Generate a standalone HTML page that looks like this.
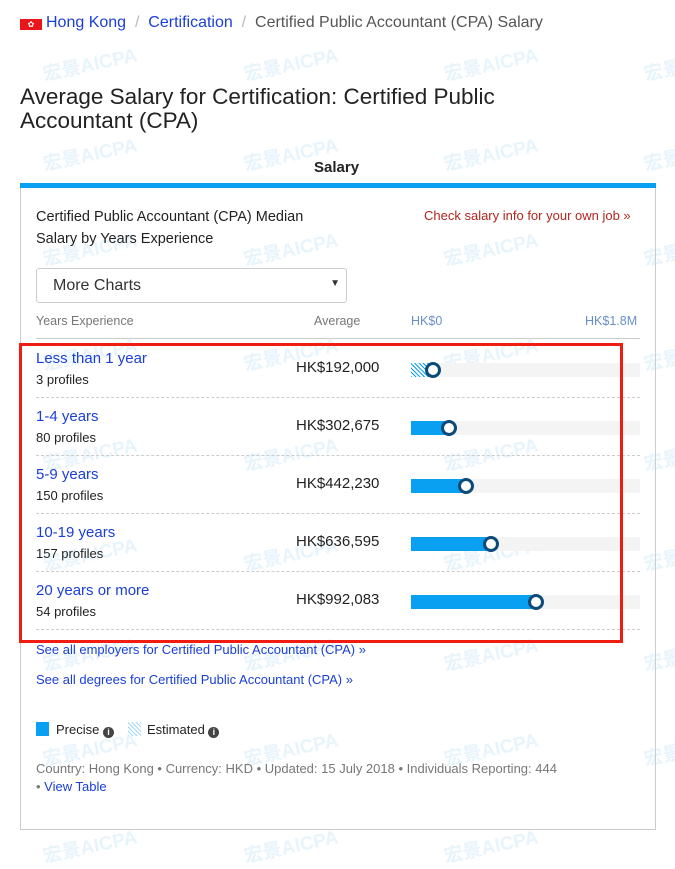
<!DOCTYPE html>
<html><head><meta charset="utf-8"><style>
*{margin:0;padding:0;box-sizing:border-box}
body{width:675px;height:848px;background:#fff;font-family:"Liberation Sans",sans-serif;position:relative;overflow:hidden;color:#222}
.a{position:absolute;white-space:nowrap}
.lnk{color:#1a3fd6}
.wm{position:absolute;color:#e8f4fc;font-weight:bold;font-size:19px;transform:rotate(-12deg);font-family:"Liberation Sans","Noto Sans CJK SC",sans-serif;white-space:nowrap}
.row{position:absolute;left:36px;width:604px;height:58px;border-bottom:1px dashed #ccc}
.row .t{position:absolute;left:0;top:10px;font-size:15px;color:#1a3fd6}
.row .p{position:absolute;left:0;top:32px;font-size:13px;color:#222}
.row .v{position:absolute;left:260px;top:19px;font-size:15px;color:#222}
.row .tr{position:absolute;left:375px;top:23px;width:229px;height:14px;background:#f4f4f4}
.row .b{position:absolute;left:375px;top:23px;height:14px;background:#0aa0f2}
.row .c{position:absolute;top:22px;width:16px;height:16px;border-radius:50%;border:3.5px solid #0c4a7a;background:#fff}
</style></head><body>
<div class="wm" style="left:42px;top:50px">宏景AICPA</div><div class="wm" style="left:243px;top:50px">宏景AICPA</div><div class="wm" style="left:443px;top:50px">宏景AICPA</div><div class="wm" style="left:643px;top:50px">宏景AICPA</div>
<div class="wm" style="left:42px;top:140px">宏景AICPA</div><div class="wm" style="left:243px;top:140px">宏景AICPA</div><div class="wm" style="left:443px;top:140px">宏景AICPA</div><div class="wm" style="left:643px;top:140px">宏景AICPA</div>
<div class="wm" style="left:42px;top:235px">宏景AICPA</div><div class="wm" style="left:243px;top:235px">宏景AICPA</div><div class="wm" style="left:443px;top:235px">宏景AICPA</div><div class="wm" style="left:643px;top:235px">宏景AICPA</div>
<div class="wm" style="left:42px;top:340px">宏景AICPA</div><div class="wm" style="left:243px;top:340px">宏景AICPA</div><div class="wm" style="left:443px;top:340px">宏景AICPA</div><div class="wm" style="left:643px;top:340px">宏景AICPA</div>
<div class="wm" style="left:42px;top:440px">宏景AICPA</div><div class="wm" style="left:243px;top:440px">宏景AICPA</div><div class="wm" style="left:443px;top:440px">宏景AICPA</div><div class="wm" style="left:643px;top:440px">宏景AICPA</div>
<div class="wm" style="left:42px;top:540px">宏景AICPA</div><div class="wm" style="left:243px;top:540px">宏景AICPA</div><div class="wm" style="left:443px;top:540px">宏景AICPA</div><div class="wm" style="left:643px;top:540px">宏景AICPA</div>
<div class="wm" style="left:42px;top:640px">宏景AICPA</div><div class="wm" style="left:243px;top:640px">宏景AICPA</div><div class="wm" style="left:443px;top:640px">宏景AICPA</div><div class="wm" style="left:643px;top:640px">宏景AICPA</div>
<div class="wm" style="left:42px;top:735px">宏景AICPA</div><div class="wm" style="left:243px;top:735px">宏景AICPA</div><div class="wm" style="left:443px;top:735px">宏景AICPA</div><div class="wm" style="left:643px;top:735px">宏景AICPA</div>
<div class="wm" style="left:42px;top:832px">宏景AICPA</div><div class="wm" style="left:243px;top:832px">宏景AICPA</div><div class="wm" style="left:443px;top:832px">宏景AICPA</div>

<div class="a" style="left:20px;top:19px;width:22px;height:11px;background:#e8161b;color:#fff;font-size:8px;text-align:center;line-height:11px">✿</div>
<div class="a" style="left:46px;top:14px;font-size:16px"><span class="lnk">Hong Kong</span><span style="color:#bbb">&nbsp; / &nbsp;</span><span class="lnk">Certification</span><span style="color:#bbb">&nbsp; / &nbsp;</span><span style="color:#555">Certified Public Accountant (CPA) Salary</span></div>
<div class="a" style="left:20px;top:85px;font-size:22.5px;line-height:24px;color:#222">Average Salary for Certification: Certified Public<br>Accountant (CPA)</div>
<div class="a" style="left:314px;top:159px;font-size:15px;font-weight:bold;color:#222">Salary</div>
<div class="a" style="left:20px;top:183px;width:636px;height:5px;background:#0aa0f2"></div>
<div class="a" style="left:20px;top:188px;width:636px;height:642px;border:1px solid #ccc;border-top:none"></div>
<div class="a" style="left:36px;top:206px;font-size:14.5px;line-height:22px;color:#222">Certified Public Accountant (CPA) Median<br>Salary by Years Experience</div>
<div class="a" style="left:424px;top:208px;font-size:13px;color:#b3261e">Check salary info for your own job »</div>
<div class="a" style="left:36px;top:268px;width:311px;height:35px;border:1px solid #ccc;border-radius:3px;font-size:16px;padding:8px 0 0 16px;color:#333">More Charts<span style="position:absolute;right:6px;top:9px;font-size:10px">▼</span></div>
<div class="a" style="left:36px;top:314px;font-size:12.5px;color:#777">Years Experience</div>
<div class="a" style="left:314px;top:314px;font-size:12.5px;color:#777">Average</div>
<div class="a" style="left:411px;top:314px;font-size:12.5px;color:#6a8fc8">HK$0</div>
<div class="a" style="left:585px;top:314px;font-size:12.5px;color:#6a8fc8">HK$1.8M</div>
<div class="a" style="left:36px;top:338px;width:604px;height:1px;background:#ccc"></div>

<div class="row" style="top:340px"><div class="t">Less than 1 year</div><div class="p">3 profiles</div><div class="v">HK$192,000</div><div class="tr"></div><div class="b" style="width:18px;background:repeating-linear-gradient(45deg,#0aa0f2 0 1px,#fff 1px 3px)"></div><div class="c" style="left:389px"></div></div>
<div class="row" style="top:398px"><div class="t">1-4 years</div><div class="p">80 profiles</div><div class="v">HK$302,675</div><div class="tr"></div><div class="b" style="width:36px"></div><div class="c" style="left:405px"></div></div>
<div class="row" style="top:456px"><div class="t">5-9 years</div><div class="p">150 profiles</div><div class="v">HK$442,230</div><div class="tr"></div><div class="b" style="width:53px"></div><div class="c" style="left:422px"></div></div>
<div class="row" style="top:514px"><div class="t">10-19 years</div><div class="p">157 profiles</div><div class="v">HK$636,595</div><div class="tr"></div><div class="b" style="width:78px"></div><div class="c" style="left:447px"></div></div>
<div class="row" style="top:572px"><div class="t">20 years or more</div><div class="p">54 profiles</div><div class="v">HK$992,083</div><div class="tr"></div><div class="b" style="width:123px"></div><div class="c" style="left:492px"></div></div>

<div class="a" style="left:19px;top:343px;width:604px;height:300px;border:3px solid #f01c10"></div>
<div class="a lnk" style="left:36px;top:642px;font-size:13px">See all employers for Certified Public Accountant (CPA) »</div>
<div class="a lnk" style="left:36px;top:672px;font-size:13px">See all degrees for Certified Public Accountant (CPA) »</div>
<div class="a" style="left:36px;top:722px;width:13px;height:14px;background:#0aa0f2"></div>
<div class="a" style="left:56px;top:722px;font-size:13px">Precise <span style="display:inline-block;width:11px;height:11px;border-radius:50%;background:#444;color:#fff;font-size:9px;text-align:center;line-height:11px;font-weight:bold;vertical-align:-1px">i</span></div>
<div class="a" style="left:128px;top:722px;width:13px;height:14px;background:repeating-linear-gradient(45deg,#9fd8f5 0 1px,#fff 1px 3px)"></div>
<div class="a" style="left:147px;top:722px;font-size:13px">Estimated <span style="display:inline-block;width:11px;height:11px;border-radius:50%;background:#444;color:#fff;font-size:9px;text-align:center;line-height:11px;font-weight:bold;vertical-align:-1px">i</span></div>
<div class="a" style="left:36px;top:760px;font-size:13px;line-height:18px;color:#777">Country: Hong Kong • Currency: HKD • Updated: 15 July 2018 • Individuals Reporting: 444<br>• <span class="lnk">View Table</span></div>
</body></html>
